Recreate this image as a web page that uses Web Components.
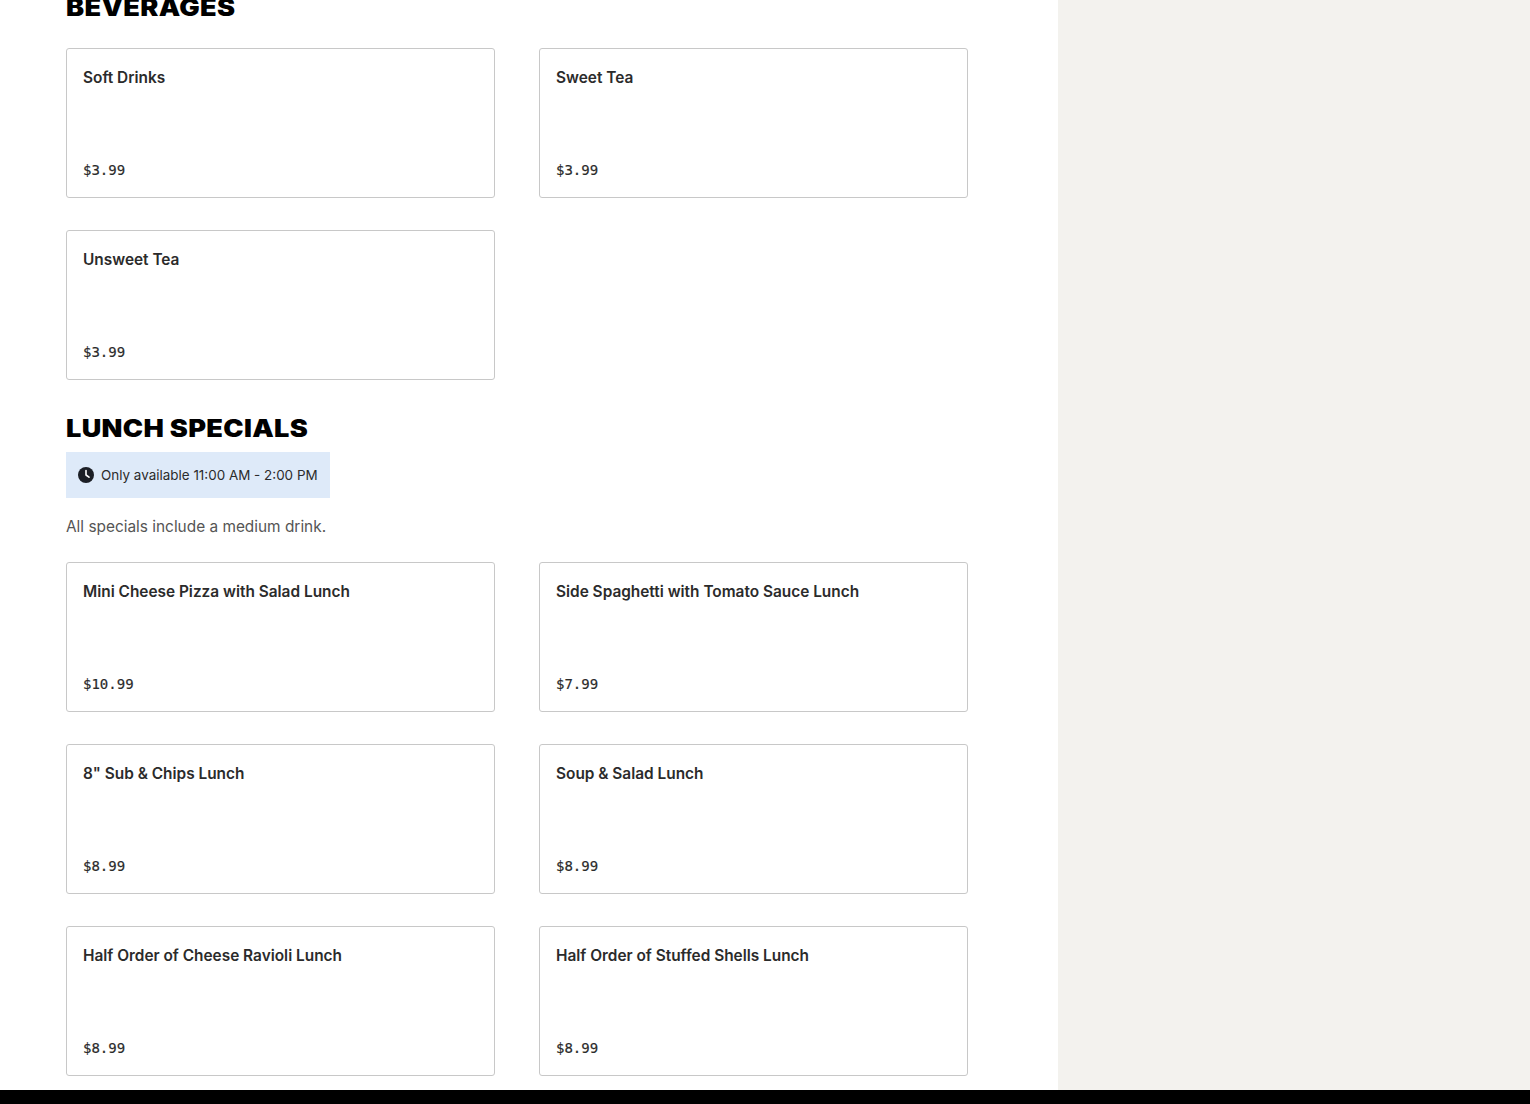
<!DOCTYPE html>
<html lang="en">
<head>
<meta charset="utf-8">
<title>Menu</title>
<style>
  html, body { margin: 0; padding: 0; height: 1104px; overflow: hidden; background: #fff; }
  body { font-family: Inter, "Liberation Sans", sans-serif; color: #2b2b2b; }
</style>
</head>
<body>
<menu-page>
  <menu-section title="BEVERAGES" style="margin-top:-5px">
    <menu-item name="Soft Drinks" price="$3.99"></menu-item>
    <menu-item name="Sweet Tea" price="$3.99"></menu-item>
    <menu-item name="Unsweet Tea" price="$3.99"></menu-item>
  </menu-section>
  <menu-section title="LUNCH SPECIALS" hours="Only available 11:00 AM - 2:00 PM" note="All specials include a medium drink.">
    <menu-item name="Mini Cheese Pizza with Salad Lunch" price="$10.99"></menu-item>
    <menu-item name="Side Spaghetti with Tomato Sauce Lunch" price="$7.99"></menu-item>
    <menu-item name='8" Sub &amp; Chips Lunch' price="$8.99"></menu-item>
    <menu-item name="Soup &amp; Salad Lunch" price="$8.99"></menu-item>
    <menu-item name="Half Order of Cheese Ravioli Lunch" price="$8.99"></menu-item>
    <menu-item name="Half Order of Stuffed Shells Lunch" price="$8.99"></menu-item>
  </menu-section>
</menu-page>
<script>
// Page frame: white menu column, grey side panel, black strip along the bottom.
class MenuPage extends HTMLElement {
  constructor() {
    super();
    this.attachShadow({ mode: "open" }).innerHTML = `
      <style>
        :host { display: grid; grid-template-rows: 1090px 14px; height: 1104px; }
        .cols { display: grid; grid-template-columns: 1058px 1fr; overflow: hidden; }
        main { padding-left: 66px; width: 902px; }
        aside { background: #f3f2ee; }
        footer { background: #000; }
      </style>
      <div class="cols">
        <main><slot></slot></main>
        <aside></aside>
      </div>
      <footer></footer>`;
  }
}

class MenuSection extends HTMLElement {
  constructor() {
    super();
    this.attachShadow({ mode: "open" }).innerHTML = `
      <style>
        :host { display: block; margin-bottom: 36px; }
        h2 {
          margin: 0; height: 26px;
          font: 900 24px/26px Inter, "Liberation Sans", sans-serif;
          letter-spacing: 0.3px;
          color: #000; white-space: nowrap;
          transform: scaleX(1.13); transform-origin: left center;
        }
        .hours {
          display: inline-flex; align-items: center; gap: 7px;
          height: 46px; padding: 0 12px; margin-top: 10px;
          background: #deeaf9; font-size: 13.45px; color: #2b2b2b;
        }
        .hours svg { width: 16px; height: 16px; display: block; }
        .note { margin: 18px 0 0; font-size: 15.4px; line-height: 22px; color: #555; }
        .grid {
          display: grid; grid-template-columns: 429px 429px;
          column-gap: 44px; row-gap: 32px; margin-top: 27px;
        }
        .note:not([hidden]) + .grid { margin-top: 24px; }
        [hidden] { display: none; }
      </style>
      <h2></h2>
      <div class="hours" hidden>
        <svg viewBox="0 0 16 16"><circle cx="8" cy="8" r="8" fill="#1c1f26"/><path d="M8 3.6V8l3 2.2" fill="none" stroke="#fff" stroke-width="1.6" stroke-linecap="round" stroke-linejoin="round"/></svg>
        <span></span>
      </div>
      <p class="note" hidden></p>
      <div class="grid"><slot></slot></div>`;
  }

  connectedCallback() {
    const root = this.shadowRoot;
    root.querySelector("h2").textContent = this.getAttribute("title") || "";
    const hours = this.getAttribute("hours");
    if (hours) {
      root.querySelector(".hours").hidden = false;
      root.querySelector(".hours span").textContent = hours;
    }
    const note = this.getAttribute("note");
    if (note) {
      const p = root.querySelector(".note");
      p.hidden = false;
      p.textContent = note;
    }
  }
}

class MenuItem extends HTMLElement {
  constructor() {
    super();
    this.attachShadow({ mode: "open" }).innerHTML = `
      <style>
        :host {
          display: flex; flex-direction: column; justify-content: space-between;
          box-sizing: border-box; height: 150px; padding: 17px 16px 17px;
          border: 1px solid #c8c8c8; border-radius: 3px; background: #fff;
        }
        .name { font-size: 15.4px; line-height: 24px; font-weight: 600; color: #2b2b2b; }
        .price { font: 500 14px/20px "DejaVu Sans Mono", "Liberation Mono", monospace; -webkit-text-stroke: 0.2px #2b2b2b; color: #2b2b2b; }
      </style>
      <div class="name"></div>
      <div class="price"></div>`;
  }

  connectedCallback() {
    this.shadowRoot.querySelector(".name").textContent = this.getAttribute("name");
    this.shadowRoot.querySelector(".price").textContent = this.getAttribute("price");
  }
}

customElements.define("menu-page", MenuPage);
customElements.define("menu-section", MenuSection);
customElements.define("menu-item", MenuItem);
</script>
</body>
</html>
